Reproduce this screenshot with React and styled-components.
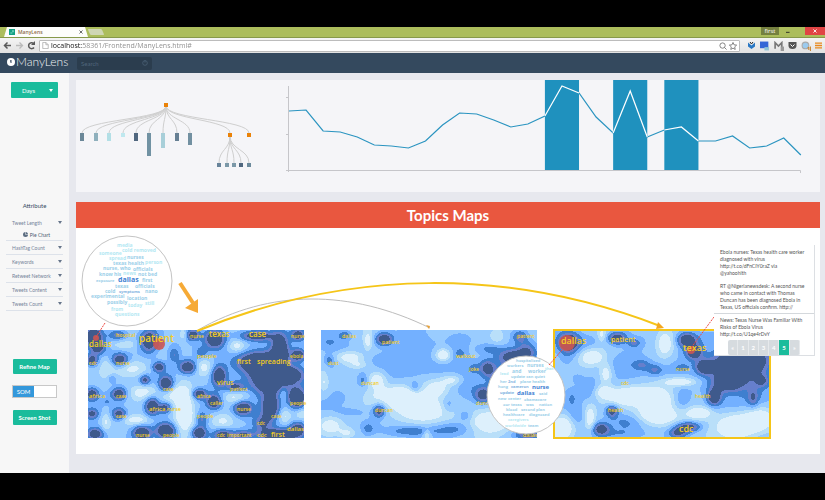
import React from "react";
import styled, { createGlobalStyle } from "styled-components";

const GlobalStyle = createGlobalStyle`
  * { box-sizing: border-box; }
  body { margin: 0; background: #000; font-family: Lato, "Open Sans", sans-serif; }
  button, input { font: inherit; margin: 0; padding: 0; border: 0; }
  svg { display: block; }
`;

/* ---------- page frame ---------- */
const Page = styled.div`
  min-height: 100vh;
  display: flex;
  flex-direction: column;
  padding: 27px 0;
  background: #000;
`;

const TabStrip = styled.div`
  display: flex;
  align-items: flex-end;
  height: 11px;
  background: #acbd5c;
  border-bottom: 1px solid #87994a;
`;
const Tab = styled.div`
  display: flex;
  align-items: center;
  gap: 3px;
  width: 84px;
  height: 10px;
  margin-left: 4px;
  padding: 0 5px;
  background: #fdfdfb;
  clip-path: polygon(3px 0, 81px 0, 100% 100%, 0 100%);
  font: 600 5px "Open Sans", sans-serif;
  color: #8c6a4a;
`;
const TabTitle = styled.span`
  flex: 1;
`;
const PlainButton = styled.button`
  display: flex;
  align-items: center;
  justify-content: center;
  background: none;
  color: #555;
`;
const NewTab = styled.button`
  width: 14px;
  height: 6px;
  margin: 0 0 2px 1px;
  background: #cfd6b4;
  transform: skewX(24deg);
  border-radius: 1px;
`;
const WindowControls = styled.div`
  display: flex;
  align-self: flex-start;
  align-items: center;
  margin-left: auto;
`;
const UserBadge = styled.span`
  width: 18px;
  height: 8px;
  background: #75803f;
  color: #fff;
  font: 6px/8px "Open Sans", sans-serif;
  text-align: center;
`;
const WindowButton = styled.button`
  display: flex;
  align-items: center;
  justify-content: ${(p) => (p.$close ? "center" : "flex-start")};
  width: ${(p) => (p.$close ? 20 : 26)}px;
  padding-left: ${(p) => (p.$close ? 0 : 7)}px;
  height: 8px;
  background: ${(p) => (p.$close ? "#e04444" : "transparent")};
`;

const Toolbar = styled.div`
  display: flex;
  align-items: center;
  gap: 3px;
  height: 15px;
  padding: 0 3px;
  background: linear-gradient(#f4f4f4, #e2e2e2);
`;
const AddressBar = styled.div`
  display: flex;
  align-items: center;
  flex: 1;
  gap: 2px;
  height: 12px;
  padding: 0 2px;
  background: #fff;
  border: 1px solid #bcbcbc;
  border-radius: 1px;
`;
const AddressInput = styled.input`
  flex: 1;
  min-width: 0;
  height: 10px;
  font: 7px/10px "Open Sans", sans-serif;
  outline: 0;
  color: transparent;
  background: linear-gradient(90deg, #111 31px, #8a8a8a 31px);
  background-clip: text;
  -webkit-background-clip: text;
`;
const Extensions = styled.div`
  display: flex;
  align-items: center;
  gap: 4px;
  padding-left: 4px;
`;

const NavBar = styled.header`
  display: flex;
  align-items: center;
  height: 20px;
  padding: 0 7px;
  background: #34495e;
`;
const Brand = styled.a`
  display: flex;
  align-items: center;
  gap: 1px;
  width: 70px;
  padding-bottom: 3px;
  color: #f1f4f6;
  font-size: 12px;
  font-weight: 300;
  line-height: 16px;
  text-decoration: none;
`;
const SearchBox = styled.label`
  display: flex;
  align-items: center;
  width: 75px;
  height: 13px;
  padding: 0 4px;
  background: #2b3d4e;
  border-radius: 2px;
`;
const SearchInput = styled.input`
  flex: 1;
  min-width: 0;
  background: transparent;
  font-size: 6px;
  color: #fff;
  outline: 0;
  &::placeholder { color: #50667b; }
`;

const Body = styled.div`
  display: flex;
  flex: 1;
  background: #e7e8ee;
`;

/* ---------- sidebar ---------- */
const Sidebar = styled.aside`
  display: flex;
  flex-direction: column;
  align-items: center;
  width: 69px;
  flex: none;
  padding-top: 9px;
  background: #f7f7f7;
`;
const ActionButton = styled.button`
  display: flex;
  align-items: center;
  justify-content: center;
  gap: ${(p) => (p.$menu ? 14 : 0)}px;
  min-width: 44px;
  height: ${(p) => (p.$menu ? 16 : 15)}px;
  padding: 0 ${(p) => (p.$menu ? 5 : 3)}px;
  padding-left: ${(p) => (p.$menu ? 11 : 3)}px;
  border-radius: 1px;
  background: #1abc9c;
  color: #fff;
  font-size: 6px;
  font-weight: ${(p) => (p.$menu ? 400 : 700)};
`;
const Caret = styled.span`
  width: 0;
  height: 0;
  border: 2px solid transparent;
  border-top: 3px solid ${(p) => p.$color};
  border-bottom: 0;
`;
const SideTitle = styled.h2`
  margin: 104px 0 6px;
  font-size: 6px;
  line-height: 8px;
  font-weight: 400;
  color: #34495e;
`;
const Accordion = styled.ul`
  width: 57px;
  margin: 0 0 48px;
  padding: 0;
  list-style: none;
`;
const AccordionItem = styled.li`
  border-bottom: 1px solid #dde2ea;
`;
const AccordionButton = styled.button`
  display: flex;
  align-items: center;
  justify-content: space-between;
  width: 100%;
  height: 13px;
  padding: 0 1px 0 6px;
  background: none;
  font-size: 5px;
  white-space: nowrap;
  color: #76849a;
`;
const SubItem = styled.div`
  display: flex;
  align-items: center;
  justify-content: center;
  gap: 2px;
  height: 11px;
  padding-left: 4px;
  font-size: 5px;
  color: #4d5c70;
`;
const ModeSwitch = styled.label`
  display: flex;
  width: 45px;
  height: 13px;
  margin: 11px 0 12px;
  border: 1px solid #c8c8c8;
  background: #fff;
  & input { position: absolute; opacity: 0; }
`;
const SwitchLabel = styled.span`
  width: 21px;
  background: #3498db;
  color: #fff;
  font-size: 6px;
  line-height: 11px;
  text-align: center;
`;

/* ---------- main ---------- */
const Main = styled.main`
  flex: 1;
  min-width: 0;
  padding: 7px 5px 19px 7px;
`;
const ChartPanel = styled.section`
  display: grid;
  grid-template-columns: 194fr 550fr;
  background: #f5f5f8;
  margin-bottom: 10px;
`;
const Drawing = styled.svg`
  width: 100%;
  height: auto;
`;
const TopicsTitle = styled.h1`
  margin: 0;
  background: #e9573f;
  color: #fff;
  font-size: 15px;
  font-weight: 700;
  line-height: 26px;
  text-align: center;
`;
const TopicsPanel = styled.section`
  position: relative;
  padding: 13.7% 6.7% 16px 1.6%;
  background: #fff;
`;
const MapRow = styled.div`
  display: grid;
  grid-template-columns: repeat(3, 1fr);
  gap: 2.5%;
`;
const TopicMap = styled(Drawing)`
  overflow: visible;
  outline: ${(p) => (p.$selected ? "2px solid #f5c518" : "none")};
  outline-offset: -1px;
`;
const Links = styled(Drawing)`
  position: absolute;
  top: 0;
  left: 0;
  pointer-events: none;
`;
const TweetCard = styled.article`
  position: absolute;
  top: 17px;
  right: 5px;
  width: 101px;
  background: #fff;
  border-right: 1px solid #dcdfe3;
  border-bottom: 1px solid #dcdfe3;
`;
const Tweet = styled.p`
  margin: 0;
  padding: 3px 0 2px 6px;
  border-top: 1px solid ${(p) => (p.$last ? "#d4d8dc" : "transparent")};
  font-size: 5px;
  line-height: 7px;
  white-space: pre;
  color: #555;
`;
const Pagination = styled.nav`
  display: flex;
  width: 72px;
  margin-left: 14px;
  height: 15px;
  border-radius: 2px;
  overflow: hidden;
`;
const PageButton = styled.button`
  flex: 1;
  background: ${(p) => (p.$active ? "#1abc9c" : "#d6dbdf")};
  border-right: 1px solid #e6e9ec;
  color: #fff;
  font-size: 6px;
  font-weight: 700;
`;

/* ---------- topic density maps ---------- */
const MAP_W = 216;
const MAP_H = 108;
const STEP = 2;
const BANDS = ["#ddf0fc", "#b9dff9", "#99ccff", "#73b0ff", "#3f7fcf", "#667fcc", "#3f5a8c"];

/* each hill: x, y, rx, ry, height; each marker: x, y, r */
const MAPS = [
  {
    name: "First week",
    base: 2.7,
    markers: [[8, 8, 3], [71, 14, 6]],
    hills: [
      [6, 7, 8, 9, 6], [10, 18, 7, 6, 4], [30, 5, 9, 5, 3], [61, 11, 9, 11, 6], [105, 5, 6, 5, 5],
      [127, 9, 10, 9, 6], [169, 6, 16, 5, 5], [210, 5, 7, 6, 5], [210, 25, 7, 6, 5], [4, 30, 6, 6, 5],
      [32, 30, 8, 6, 5], [71, 37, 6, 5, 5], [86, 25, 6, 8, 2.8], [100, 37, 9, 7, 6], [131, 46, 7, 10, 6],
      [147, 57, 9, 5, 4], [113, 23, 6, 6, 2], [24, 49, 4, 4, 2], [57, 50, 5, 5, 4], [78, 54, 7, 8, 6],
      [31, 64, 7, 6, 5], [4, 64, 6, 6, 5], [19, 72, 2, 2, 2], [111, 64, 7, 5, 5], [126, 72, 7, 7, 5.5],
      [64, 76, 7, 9, 6], [77, 78, 6, 5, 4.5], [155, 78, 9, 7, 6], [4, 84, 6, 5, 4], [31, 84, 7, 6, 4.5],
      [182, 78, 8, 11, 6], [209, 68, 8, 10, 6], [114, 89, 6, 8, 2.8], [174, 93, 9, 8, 3], [7, 104, 8, 6, 5],
      [54, 103, 9, 7, 6], [78, 101, 10, 8, 6], [111, 103, 7, 6, 6], [135, 105, 10, 6, 5], [155, 105, 10, 5, 4],
      [189, 105, 18, 6, 6], [210, 99, 8, 7, 5],
      [170, 32, 20, 10, 6], [181, 48, 19, 19, 7], [192, 18, 8, 15, 6], [203, 45, 14, 8, 5],
      [35, 15, 13, 5, -1.6], [45, 38, 16, 9, -2.5], [19, 37, 6, 10, -1.2], [88, 64, 14, 7, -2.2],
      [96, 82, 10, 24, -4], [54, 62, 13, 7, -2.4], [48, 90, 14, 5, -2.4], [149, 16, 8, 6, -2.2],
      [115, 37, 9, 8, -2.2], [95, 4, 4, 6, -2], [147, 67, 12, 7, -2], [135, 91, 10, 7, -1.8],
      [195, 64, 4, 7, -2], [197, 86, 6, 8, -2], [18, 92, 5, 10, -2], [213, 84, 6, 5, -1.6],
    ],
    words: [
      ["dallas", 1, 17, 8], ["hospital", 28, 7, 5], ["patient", 51, 12, 10], ["nurse", 102, 8, 5],
      ["texas", 121, 7, 8], ["case", 161, 7, 8], ["nurse", 203, 8, 5], ["people", 109, 28, 6],
      ["first", 149, 34, 7], ["spreading", 169, 34, 7], ["ebola", 202, 28, 5], ["cdc", 1, 35, 5],
      ["nurse", 28, 35, 5], ["virus", 129, 55, 7], ["patient", 142, 61, 5], ["case", 75, 61, 5],
      ["africa", 109, 68, 5], ["africa", 1, 68, 6], ["case", 28, 68, 5], ["caller", 122, 75, 5],
      ["people", 202, 75, 5], ["africa", 61, 81, 6], ["nurse", 79, 81, 5], ["nurse", 149, 81, 5],
      ["people", 109, 88, 5], ["case", 28, 88, 5], ["case", 183, 88, 5], ["cdc", 169, 95, 5],
      ["dallas", 199, 101, 6], ["nurse", 48, 107, 5], ["people", 75, 107, 5], ["cdc", 129, 107, 5],
      ["important", 139, 107, 5], ["cdc", 169, 107, 6], ["first", 183, 107, 7],
    ],
  },
  {
    name: "Second week",
    base: 2.6,
    markers: [],
    hills: [
      [24, 5, 6, 4, 2.4], [63, 9, 8, 6, 5.5], [199, 7, 7, 6, 3.2], [139, 23, 6, 5, 1.6], [8, 30, 5, 5, 2.2],
      [166, 38, 7, 8, 4], [192, 27, 15, 8, 5], [162, 65, 8, 8, 5], [153, 38, 6, 5, 1.2], [169, 19, 12, 5, 2],
      [206, 21, 9, 9, 3], [42, 50, 5, 6, 1.8], [58, 81, 6, 6, 4.6], [47, 99, 5, 5, 1.6], [180, 52, 12, 16, 4],
      [82, 25, 26, 20, 1.1], [116, 38, 28, 11, 0.9], [139, 10, 14, 9, 1], [94, 58, 6, 6, 2],
      [149, 58, 12, 18, 1.1], [127, 75, 6, 7, 1.6], [144, 86, 7, 6, 1.7], [32, 82, 16, 4, 0.9],
      [49, 95, 12, 9, 0.9], [90, 101, 24, 5, 2.2], [132, 99, 20, 7, 2.2], [16, 67, 5, 5, 1], [9, 12, 14, 9, 1],
      [12, 38, 8, 12, 0.8], [207, 104, 12, 5, 4], [62, 70, 9, 10, 1], [176, 6, 8, 9, -1.4],
      [29, 27, 14, 6, -3], [38, 35, 10, 4, -1.8], [47, 11, 4, 9, -2.4], [56, 50, 9, 9, -3],
      [75, 66, 24, 9, -3.4], [100, 78, 26, 14, -3.8], [131, 50, 10, 5, -2.2], [122, 25, 7, 6, -3.8],
      [106, 104, 4, 5, -2.4], [9, 96, 12, 9, -2.8], [171, 92, 22, 12, -3.8], [116, 58, 12, 8, -2.6],
      [26, 103, 8, 5, -2], [3, 52, 4, 9, -1.4],
    ],
    words: [
      ["dallas", 21, 8, 5], ["patient", 61, 14, 5], ["patient", 196, 8, 5], ["walkout", 135, 28, 5],
      ["joke", 148, 41, 5], ["dust", 7, 35, 5], ["duncan", 40, 55, 5], ["duncan", 54, 82, 5],
      ["duncan", 155, 75, 5], ["dallas", 202, 107, 5],
    ],
  },
  {
    name: "Third week",
    base: 2.6,
    selected: true,
    markers: [[13, 13, 8], [137, 20, 4]],
    hills: [
      [15, 12, 10, 9, 6], [63, 8, 9, 6, 5], [80, 13, 6, 4, 2.6], [133, 10, 9, 7, 6], [140, 22, 8, 7, 5.4],
      [128, 38, 7, 4, 1.8], [88, 35, 8, 5, 2], [101, 40, 7, 5, 2.2], [150, 37, 8, 7, 5], [181, 36, 22, 17, 8],
      [173, 54, 15, 8, 4], [160, 67, 7, 8, 5.5], [208, 51, 7, 6, 3], [199, 68, 5, 9, 2.4], [206, 30, 12, 14, 3],
      [58, 81, 6, 6, 4.8], [47, 99, 8, 6, 5], [134, 97, 12, 5, 5], [124, 103, 9, 5, 4],
      [23, 48, 7, 6, 1], [35, 58, 7, 11, 1.2], [18, 68, 7, 12, 1.1], [23, 86, 8, 9, 1.2], [12, 28, 9, 13, 1],
      [36, 12, 12, 9, 1], [77, 28, 18, 16, 1.1], [110, 38, 25, 11, 1], [127, 70, 9, 11, 1.4],
      [72, 92, 18, 8, 1.6], [64, 104, 20, 6, 1.4], [173, 68, 22, 12, 1.1], [152, 10, 14, 10, 1],
      [199, 62, 14, 14, 1],
      [38, 27, 13, 9, -3.6], [52, 44, 6, 10, -2.8], [50, 62, 9, 6, -2.6], [73, 66, 18, 8, -3.6],
      [102, 68, 20, 11, -4], [103, 85, 20, 10, -3.6], [126, 52, 16, 4, -3.2], [111, 14, 9, 14, -3],
      [145, 83, 13, 6, -3.2], [8, 98, 11, 12, -4], [184, 96, 22, 12, -4.6], [36, 88, 5, 12, -2.8],
      [48, 5, 4, 7, -2], [205, 88, 12, 10, -2.6],
    ],
    words: [
      ["dallas", 7, 14, 9], ["patient", 57, 12, 7], ["texas", 129, 21, 9], ["nurse", 122, 41, 5],
      ["cdc", 67, 55, 5], ["health", 141, 68, 5], ["health", 54, 82, 5], ["cdc", 125, 102, 9],
    ],
  },
];

function sampleField(base, hills) {
  const rows = [];
  for (let y = 0; y <= MAP_H; y += STEP) {
    const row = [];
    for (let x = 0; x <= MAP_W; x += STEP) {
      let v = base + 0.35 * Math.sin(x / 15 + Math.cos(y / 14) * 2) + 0.2 * Math.cos(y / 11 - x / 19);
      for (const [hx, hy, rx, ry, h] of hills) {
        const d = ((x - hx) / rx) ** 2 + ((y - hy) / ry) ** 2;
        if (d < 9) v += h * Math.exp(-d);
      }
      row.push(v);
    }
    rows.push(row);
  }
  return rows;
}

/* filled region where the field is at or above a level */
function regionPath(field, level) {
  let d = "";
  for (let j = 0; j < field.length - 1; j++) {
    let run = -1;
    const flush = (i) => {
      if (run >= 0) d += `M${run * STEP} ${j * STEP}H${i * STEP}V${(j + 1) * STEP}H${run * STEP}Z`;
      run = -1;
    };
    for (let i = 0; i < field[j].length - 1; i++) {
      const c = [
        [i, j, field[j][i]],
        [i + 1, j, field[j][i + 1]],
        [i + 1, j + 1, field[j + 1][i + 1]],
        [i, j + 1, field[j + 1][i]],
      ];
      const inside = c.filter((p) => p[2] >= level).length;
      if (inside === 4) {
        if (run < 0) run = i;
        continue;
      }
      flush(i);
      if (!inside) continue;
      const pts = [];
      c.forEach((a, k) => {
        const b = c[(k + 1) % 4];
        if (a[2] >= level) pts.push([a[0], a[1]]);
        if (a[2] >= level !== b[2] >= level) {
          const t = (level - a[2]) / (b[2] - a[2]);
          pts.push([a[0] + (b[0] - a[0]) * t, a[1] + (b[1] - a[1]) * t]);
        }
      });
      d += "M" + pts.map((p) => `${(p[0] * STEP).toFixed(1)} ${(p[1] * STEP).toFixed(1)}`).join("L") + "Z";
    }
    flush(field[j].length - 1);
  }
  return d;
}

const DENSITY = MAPS.map((m) => {
  const field = sampleField(m.base, m.hills);
  return BANDS.slice(1).map((color, i) => ({ color, d: regionPath(field, i + 1) }));
});

function DensityMap({ map, bands }) {
  return (
    <TopicMap viewBox={`0 0 ${MAP_W} ${MAP_H}`} $selected={map.selected} role="img" aria-label={map.name}>
      <rect width={MAP_W} height={MAP_H} fill={BANDS[0]} />
      <g shapeRendering="crispEdges">
        {bands.map((b) => (
          <path key={b.color} d={b.d} fill={b.color} />
        ))}
      </g>
      {map.markers.map(([x, y, r]) => (
        <circle key={x} cx={x} cy={y} r={r} fill="#cc5552" fillOpacity="0.9" />
      ))}
      <g fill="#f5cd22" fontFamily='"Open Sans", sans-serif' fontWeight="600">
        {map.words.map(([text, x, y, size], i) => (
          <text key={i} x={x} y={y} fontSize={size}>{text}</text>
        ))}
      </g>
    </TopicMap>
  );
}

/* ---------- word bubbles ---------- */
const TONES = ["#b4e8f3", "#9ccfe9", "#7fb2e0", "#3f7fd3"];
const BUBBLES = [
  {
    cx: 127, cy: 281, r: 45,
    words: [
      ["media", 117, 247, 5, 0], ["cold removed", 122, 252, 5, 0], ["someone", 99, 255, 5, 0],
      ["spread", 109, 260, 5, 0], ["nurses", 127, 259, 5, 1], ["texas health", 113, 265, 5, 1],
      ["person", 145, 264, 5, 0], ["nurse, who", 103, 270, 5, 1], ["officials", 133, 271, 5, 1],
      ["know his", 99, 276, 5, 1], ["news", 123, 275, 5, 0], ["not bed", 138, 276, 5, 1],
      ["exposure", 96, 282, 4, 1], ["dallas", 118, 282, 7, 3], ["first", 142, 282, 5, 1],
      ["texas", 115, 288, 5, 1], ["officials", 135, 288, 5, 1], ["cold", 105, 293, 5, 1],
      ["symptoms", 119, 293, 4, 2], ["nano", 145, 293, 5, 1], ["experimental", 91, 298, 5, 1],
      ["location", 127, 300, 5, 1], ["possibly", 107, 304, 5, 1], ["today", 128, 307, 5, 0],
      ["still", 145, 305, 5, 0], ["from", 111, 311, 5, 0], ["questions", 115, 316, 5, 0],
    ],
  },
  {
    cx: 526, cy: 395, r: 39,
    words: [
      ["hospitalized", 516, 362, 4, 1], ["workers", 507, 367, 4, 1], ["nurses", 527, 367, 5, 1],
      ["that", 545, 370, 4, 0], ["lead", 500, 375, 4, 0], ["and", 512, 373, 5, 1], ["worker", 528, 373, 5, 1],
      ["update can quiet", 511, 378, 4, 1], ["her", 500, 383, 4, 1], ["2nd", 508, 383, 4, 2],
      ["plane health", 520, 383, 4, 1], ["hong", 498, 388, 4, 1], ["cameron", 511, 388, 4, 2],
      ["nurse", 532, 389, 6, 3], ["update", 500, 394, 4, 2], ["dallas", 517, 395, 6, 3], ["said", 539, 395, 4, 1],
      ["new", 498, 400, 4, 1], ["center", 508, 400, 4, 1], ["obamacare", 524, 401, 4, 1],
      ["our texas", 503, 406, 4, 1], ["was", 526, 406, 4, 1], ["nation", 539, 406, 4, 1],
      ["blood", 506, 411, 4, 1], ["second plan", 521, 411, 4, 1], ["healthcare", 503, 416, 4, 1],
      ["diagnosed", 529, 416, 4, 1], ["caregivers", 508, 421, 4, 0], ["worldwide", 505, 427, 4, 0],
      ["team", 528, 427, 4, 1],
    ],
  },
];

function LinkLayer() {
  return (
    <Links viewBox="76 228 744 226" aria-hidden="true">
      <g fill="none">
        <path d="M198 330C270 289 350 289 430 328" stroke="#bdbdbd" />
        <path d="M197 331C350 268 510 268 660 326" stroke="#f5c518" strokeWidth="2" />
      </g>
      <path d="M426 325l4 1l-1 3z" fill="#e8a23a" />
      <path d="M658 322l6 6l-8 1z" fill="#f5a81e" />
      <path d="M180 283L193 303" stroke="#f6aa36" strokeWidth="4" />
      <path d="M185 308L198 313L198 299Z" fill="#f6aa36" />
      {BUBBLES.map((b) => (
        <g key={b.cx} fontFamily='"Liberation Sans Narrow", "Open Sans", sans-serif' fontWeight="700">
          <circle cx={b.cx} cy={b.cy} r={b.r} fill="#fff" stroke="#c4c4c4" />
          {b.words.map(([text, x, y, size, tone], i) => (
            <text key={i} x={x} y={y} fontSize={size} fill={TONES[tone]}>{text}</text>
          ))}
        </g>
      ))}
      <g stroke="#ee4a44" strokeDasharray="2 1">
        <path d="M105 323L96 337" />
        <path d="M549 365L562 350" />
        <path d="M714 317L691 348" />
      </g>
    </Links>
  );
}

/* ---------- hierarchy and trend charts ---------- */
const LEAVES = [
  [6, 8, "#6b8798"], [20, 8, "#8fb0bd"], [33, 8, "#b3dfe6"], [47, 4, "#bfe8ef"], [60, 8, "#50677f"],
  [73, 23, "#7192a3"], [87, 15, "#a8cfd9"], [101, 8, "#667f93"], [114, 12, "#7290a1"],
];
const SUB_LEAVES = [[143, "#67839a"], [151, "#7b98a8"], [158, "#7b98a8"], [165, "#50677f"], [173, "#6c8a9c"]];
const curve = (x1, y1, x2, y2) => `M${x1} ${y1}C${x1} ${(y1 + y2) / 2} ${x2} ${(y1 + y2) / 2} ${x2} ${y2}`;

function TreeChart() {
  return (
    <Drawing viewBox="0 0 194 112" role="img" aria-label="Hierarchy">
      <g fill="none" stroke="#cfcfcf">
        {[...LEAVES.map((l) => l[0]), 154, 173].map((x) => (
          <path key={x} d={curve(90, 26, x, 53)} />
        ))}
        {SUB_LEAVES.map(([x]) => (
          <path key={x} d={curve(154, 56, x, 83)} />
        ))}
      </g>
      {LEAVES.map(([x, h, color]) => (
        <rect key={x} x={x - 2} y="53" width="4" height={h} fill={color} />
      ))}
      {SUB_LEAVES.map(([x, color]) => (
        <rect key={x} x={x - 2} y="83" width="4" height="4" fill={color} />
      ))}
      {[[90, 23], [154, 53], [173, 53]].map(([x, y]) => (
        <rect key={x} x={x - 2} y={y} width="4" height="4" fill="#ea8208" />
      ))}
    </Drawing>
  );
}

const TREND = [
  31, 30, 51, 52, 57, 65, 66, 68, 61, 45, 33, 34, 40, 47, 44, 36, 6, 13, 37, 53, 11, 57, 50, 47, 61, 61, 56,
  68, 66, 58, 75,
];
const PEAKS = [[15, 17], [19, 21], [22, 24]];
const px = (i) => 19 + i * 17.06;
const linePoints = (from, to) =>
  TREND.slice(from, to + 1).map((v, i) => `${px(from + i)},${v}`).join(" ");

function TrendChart() {
  return (
    <Drawing viewBox="0 0 550 112" role="img" aria-label="Tweets over time">
      {PEAKS.map(([a, b]) => (
        <rect key={a} x={px(a)} y="0" width={px(b) - px(a)} height="90" fill="#1f91be" />
      ))}
      <path d="M18.5 6V92M16 17.500H18M16 54.500H18M16 90.500H530.500V93" fill="none" stroke="#c6c6ca" />
      <polyline points={linePoints(0, 30)} fill="none" stroke="#2a94c0" strokeWidth="1.200" />
      {PEAKS.map(([a, b]) => (
        <polyline key={a} points={linePoints(a, b)} fill="none" stroke="#fff" strokeWidth="1.200" />
      ))}
    </Drawing>
  );
}

/* ---------- browser and brand glyphs ---------- */
const Glyph = ({ size = 9, children }) => (
  <svg width={size} height={size} viewBox="0 0 9 9" fill="none" stroke="#5a5a5a" aria-hidden="true">{children}</svg>
);

function BrowserChrome() {
  return (
    <>
      <TabStrip>
        <Tab>
          <Glyph size={6}>
            <rect width="9" height="9" fill="#12a084" stroke="none" />
            <path d="M2 6h3M5 3h2M6 2v3" stroke="#bff3e6" />
          </Glyph>
          <TabTitle>ManyLens</TabTitle>
          <PlainButton aria-label="Close tab"><Glyph size={4}><path d="M1 1l7 7M8 1L1 8" strokeWidth="2" /></Glyph></PlainButton>
        </Tab>
        <NewTab aria-label="New tab" />
        <WindowControls>
          <UserBadge>first</UserBadge>
          <WindowButton aria-label="Minimize"><Glyph size={8}><path d="M0 6h4" stroke="#222" /></Glyph></WindowButton>
          <WindowButton $close aria-label="Close">
            <Glyph size={4}><path d="M1 1l7 7M8 1L1 8" stroke="#fff" strokeWidth="2" /></Glyph>
          </WindowButton>
        </WindowControls>
      </TabStrip>
      <Toolbar>
        <PlainButton aria-label="Back"><Glyph><path d="M8 4.500H1.500M4.500 1.500l-3 3l3 3" strokeWidth="1.500" /></Glyph></PlainButton>
        <PlainButton aria-label="Forward"><Glyph><path d="M1 4.500h6.500M4.500 1.500l3 3l-3 3" stroke="#bbb" strokeWidth="1.300" /></Glyph></PlainButton>
        <PlainButton aria-label="Reload"><Glyph><path d="M7 6.500A3 3 0 1 1 6.500 2.300" strokeWidth="1.500" /><path d="M8 0v4H4z" fill="#5a5a5a" stroke="none" /></Glyph></PlainButton>
        <AddressBar>
          <Glyph size={7}><path d="M1 .5h4l3 3v5H1zM5 .5v3h3" stroke="#aaa" /></Glyph>
          <AddressInput aria-label="Address" defaultValue="localhost:58361/Frontend/ManyLens.html#" />
          <Glyph size={8}><circle cx="4" cy="4" r="3" stroke="#777" /><path d="M6 6l2.500 2.500" stroke="#777" /></Glyph>
          <Glyph size={8}><path d="M4.500 .5l1.200 2.700l2.900.3l-2.200 2l.6 2.900l-2.500-1.500l-2.500 1.500l.6-2.900l-2.200-2l2.900-.3z" stroke="#777" /></Glyph>
        </AddressBar>
        <Extensions>
          <Glyph><path d="M1 1.500l3.500 3L8 1.500v4L4.500 8L1 5.500z" fill="#2a78c4" stroke="none" /><path d="M3 1l1.500 2L6 1" stroke="#222" /></Glyph>
          <Glyph size={10}><rect y="0.500" width="7.500" height="6" fill="#3566d6" stroke="none" /><rect x="4" y="5.500" width="4" height="3" fill="#8fc3d6" stroke="none" /></Glyph>
          <Glyph size={10}><path d="M1 7V1.500l3 3l3-3V6" strokeWidth="1.500" stroke="#777" /><path d="M6 5h3v4H6z" fill="#999" stroke="none" /></Glyph>
          <Glyph><path d="M.5 1h8v3.500a4 3.500 0 0 1-8 0z" fill="#555" stroke="none" /><path d="M2.500 3.500l2 2l2-2" stroke="#fff" /></Glyph>
          <Glyph size={10}><circle cx="4" cy="4" r="3" fill="#9ccbee" stroke="#aaa" /><path d="M6 6h1v2M8.500 5v4" stroke="#c98a3a" /></Glyph>
          <Glyph size={7}><path d="M0 1.500h9M0 4.500h9M0 7.500h9" stroke="#e8891c" strokeWidth="1.800" /></Glyph>
        </Extensions>
      </Toolbar>
    </>
  );
}

const ATTRIBUTES = ["Tweet Length", "HashTag Count", "Keywords", "Retweet Network", "Tweets Content", "Tweets Count"];
const TWEETS = [
  "Ebola nurses: Texas health care worker\ndiagnosed with virus\nhttp://t.co/dFnCIY0raZ via\n@yahoohlth",
  "RT @Nigerianewsdesk: A second nurse\nwho came in contact with Thomas\nDuncan has been diagnosed Ebola in\nTexas, US officials confirm. http://",
  "News: Texas Nurse Was Familiar With\nRisks of Ebola Virus\nhttp://t.co/U1qe4rDvY",
];

export default function App() {
  return (
    <Page>
      <GlobalStyle />
      <BrowserChrome />
      <NavBar>
        <Brand href="#">
          <svg width="8" height="8" viewBox="0 0 8 8" aria-hidden="true">
            <circle cx="4" cy="4" r="4" fill="#fff" />
            <path d="M4 2v3M3 3h1" stroke="#34495e" />
          </svg>
          ManyLens
        </Brand>
        <SearchBox>
          <SearchInput aria-label="Search" placeholder="Search" />
          <Glyph size={6}><circle cx="4.500" cy="4.500" r="3.500" stroke="#50667b" /><path d="M4.500 0v4" stroke="#50667b" /></Glyph>
        </SearchBox>
      </NavBar>
      <Body>
        <Sidebar>
          <ActionButton $menu>Days<Caret $color="#fff" /></ActionButton>
          <SideTitle>Attribute</SideTitle>
          <Accordion>
            {ATTRIBUTES.map((name, i) => (
              <AccordionItem key={name}>
                <AccordionButton aria-expanded={i === 0}>{name}<Caret $color="#66758a" /></AccordionButton>
                {i === 0 && (
                  <SubItem>
                    <svg width="5" height="5" viewBox="0 0 5 5" aria-hidden="true"><circle cx="2.500" cy="2.500" r="2.500" fill="#5b6c80" /><path d="M2.500 0v2.500H5" stroke="#fff" strokeWidth="0.500" fill="none" /></svg>
                    Pie Chart
                  </SubItem>
                )}
              </AccordionItem>
            ))}
          </Accordion>
          <ActionButton>Refine Map</ActionButton>
          <ModeSwitch>
            <input type="checkbox" defaultChecked aria-label="SOM mode" />
            <SwitchLabel>SOM</SwitchLabel>
          </ModeSwitch>
          <ActionButton>Screen Shot</ActionButton>
        </Sidebar>
        <Main>
          <ChartPanel>
            <TreeChart />
            <TrendChart />
          </ChartPanel>
          <TopicsTitle>Topics Maps</TopicsTitle>
          <TopicsPanel>
            <MapRow>
              {MAPS.map((m, i) => (
                <DensityMap key={m.name} map={m} bands={DENSITY[i]} />
              ))}
            </MapRow>
            <LinkLayer />
            <TweetCard>
              {TWEETS.map((t, i) => (
                <Tweet key={i} $last={i === 2}>{t}</Tweet>
              ))}
              <Pagination aria-label="Tweets">
                {["«", "1", "2", "3", "4", "5", "»"].map((p) => (
                  <PageButton key={p} $active={p === "5"}>{p}</PageButton>
                ))}
              </Pagination>
            </TweetCard>
          </TopicsPanel>
        </Main>
      </Body>
    </Page>
  );
}
